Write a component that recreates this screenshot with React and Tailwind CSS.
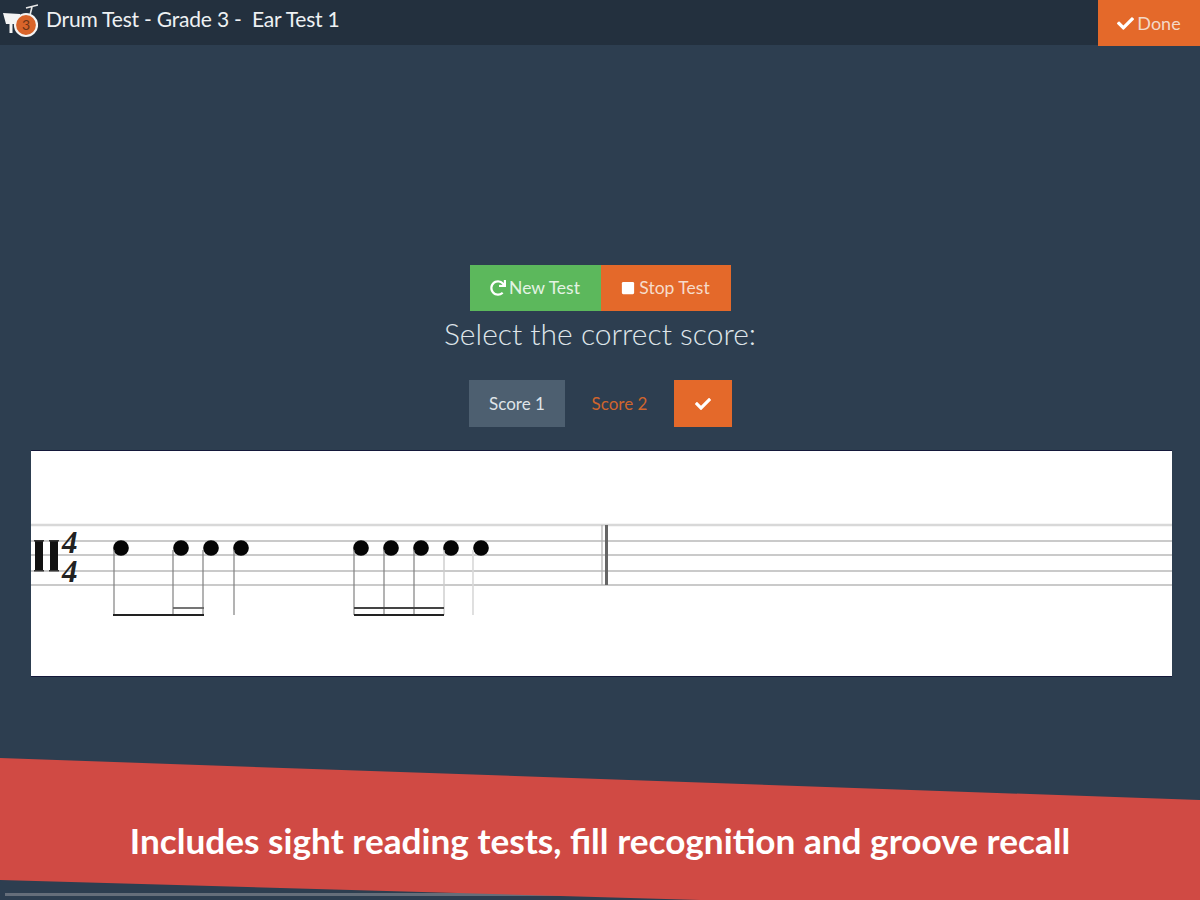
import { FaCheck, FaRedo, FaStop } from 'react-icons/fa';

const notes = [121, 181, 211, 241, 361, 391, 421, 451, 481];

function DrumLogo() {
  return (
    <svg width="38" height="40" viewBox="0 0 38 40" className="shrink-0">
      <path d="M3 13L20 14V24L6 24Z" fill="#f4f4f4" />
      <path d="M11 24V33" stroke="#f4f4f4" strokeWidth="3" fill="none" />
      <path d="M32 7L30 15M26 8L38 5" stroke="#e8e8e8" strokeWidth="1.6" fill="none" />
      <circle cx="26" cy="25" r="11" fill="#d9642a" stroke="#f4f4f4" strokeWidth="2.2" />
      <text x="26" y="30" textAnchor="middle" fontSize="14" fontFamily="Lato, sans-serif" fill="#6b3418">3</text>
    </svg>
  );
}

function Score() {
  return (
    <svg width="1141" height="225" viewBox="31 451 1141 225" className="block">
      <line x1="31" x2="1172" y1="525" y2="525" stroke="#d8d8d8" strokeWidth="2.5" />
      {[541, 555, 571, 585].map((y) => (
        <line key={y} x1="31" x2="1172" y1={y} y2={y} stroke="#969696" strokeWidth="1.2" />
      ))}
      <rect x="35" y="541" width="8" height="30" fill="#111" />
      <rect x="50" y="541" width="8" height="30" fill="#111" />
      <rect x="34" y="540" width="10" height="1.5" fill="#333" />
      <rect x="34" y="570" width="10" height="1.5" fill="#333" />
      <rect x="49" y="540" width="10" height="1.5" fill="#333" />
      <rect x="49" y="570" width="10" height="1.5" fill="#333" />
      <text x="62" y="553" fontFamily="'Liberation Serif', serif" fontStyle="italic" fontWeight="700" fontSize="31" fill="#222">4</text>
      <text x="62" y="582" fontFamily="'Liberation Serif', serif" fontStyle="italic" fontWeight="700" fontSize="31" fill="#222">4</text>
      {notes.map((x) => (
        <circle key={x} cx={x} cy="548" r="7.8" fill="#050505" />
      ))}
      {[114, 173, 203, 234, 354, 384, 414].map((x) => (
        <line key={x} x1={x} x2={x} y1="550" y2="615" stroke="#808080" strokeWidth="1.2" />
      ))}
      <line x1="444" x2="444" y1="550" y2="615" stroke="#cccccc" strokeWidth="1.4" />
      <line x1="473" x2="473" y1="550" y2="615" stroke="#d8d8d8" strokeWidth="1.6" />
      <line x1="113" x2="204" y1="615" y2="615" stroke="#222" strokeWidth="2" />
      <line x1="173" x2="204" y1="608" y2="608" stroke="#666" strokeWidth="1.8" />
      <line x1="354" x2="444" y1="615" y2="615" stroke="#222" strokeWidth="2" />
      <line x1="354" x2="444" y1="608" y2="608" stroke="#444" strokeWidth="1.8" />
      <line x1="602" x2="602" y1="525" y2="585" stroke="#b0b0b0" strokeWidth="1.2" />
      <line x1="606.5" x2="606.5" y1="525" y2="585" stroke="#666" strokeWidth="3" />
    </svg>
  );
}

export default function App() {
  return (
    <div className="relative h-[900px] overflow-hidden bg-[#2d3e50] font-['Lato','Noto_Sans',sans-serif]">
      <header className="flex h-[45px] items-start justify-between bg-[#23303e]">
        <div className="flex items-center">
          <DrumLogo />
          <span className="mt-[-3px] ml-[8px] text-[21px] tracking-[-0.2px] text-[#eef1f3]">Drum Test - Grade 3 -&nbsp; Ear Test 1</span>
        </div>
        <button className="flex h-[46px] w-[102px] items-center justify-center gap-[3px] bg-[#e4692a] text-[18px] text-[#f3d9c8]">
          <FaCheck className="text-[17px] text-white" />
          Done
        </button>
      </header>

      <main className="flex flex-col items-center pt-[220px]">
        <div className="flex h-[46px] w-[261px] text-[17.5px]">
          <button className="flex w-[131px] items-center justify-center gap-[3px] bg-[#5cb85c] text-[#e4f3e4]">
            <FaRedo className="text-[16px] text-white" />
            New Test
          </button>
          <button className="flex w-[130px] items-center justify-center gap-[4px] bg-[#e4692a] text-[#f6dccb]">
            <FaStop className="text-[14px] text-white" />
            Stop Test
          </button>
        </div>
        <h2 className="mt-[1px] text-[30px] leading-[42px] font-light text-[#dfe5ea]">Select the correct score:</h2>
        <div className="mt-[26px] ml-[1px] flex h-[47px] items-stretch text-[17px]">
          <button className="w-[96px] bg-[#4d5f70] text-[#dfe4e8]">Score 1</button>
          <button className="w-[109px] text-[#d0652d]">Score 2</button>
          <button className="flex w-[58px] items-center justify-center bg-[#e4692a] text-white">
            <FaCheck className="text-[16px]" />
          </button>
        </div>
        <div className="mt-[23px] ml-[3px] h-[227px] w-[1141px] border-y border-[#14183a] bg-white">
          <Score />
        </div>
      </main>

      <div className="absolute bottom-[4px] left-[5px] h-[3px] w-[1167px] bg-[#8a8f96]/60" />
      <div className="absolute inset-x-0 bottom-0 flex h-[142px] items-center justify-center bg-[#d04a44] [clip-path:polygon(0_0,100%_42px,100%_100%,700px_100%,0_122px)]">
        <p className="mt-[22px] text-[35.2px] font-bold text-white">Includes sight reading tests, fill recognition and groove recall</p>
      </div>
    </div>
  );
}
